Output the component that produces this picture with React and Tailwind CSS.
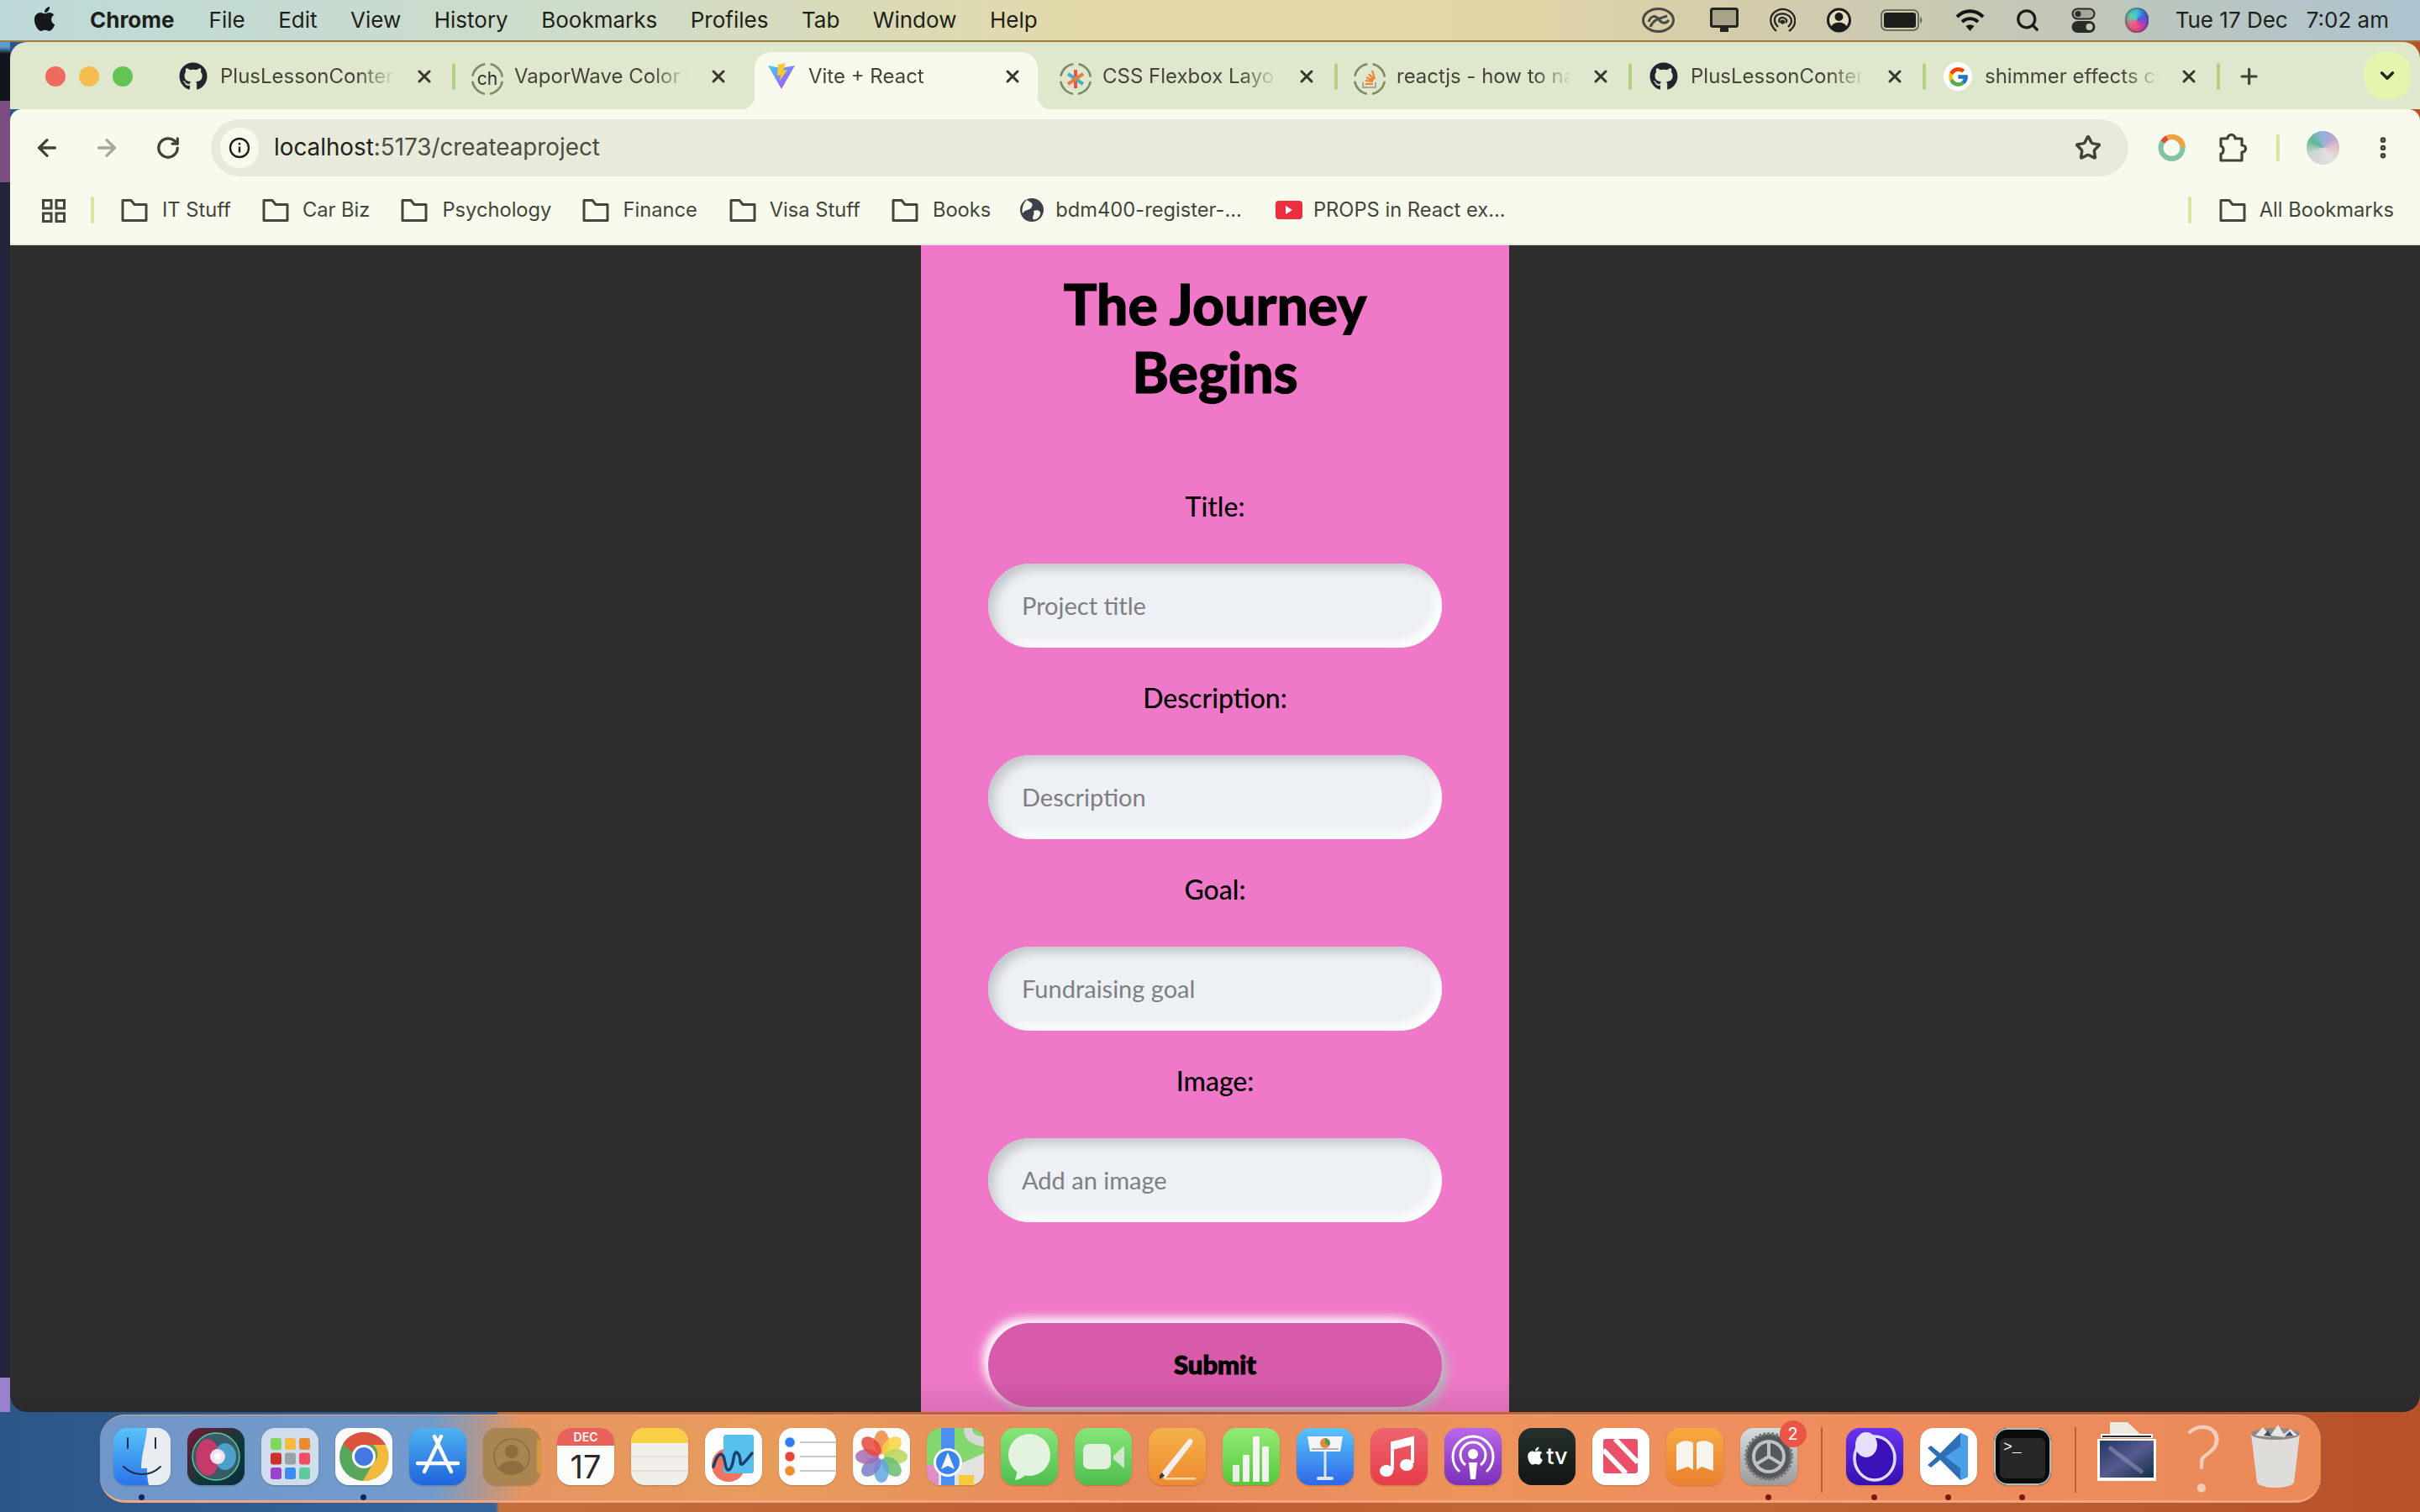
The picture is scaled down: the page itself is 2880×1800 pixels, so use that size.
import { ArrowLeft, ArrowRight, RotateCw, Star, Plus, ChevronDown, X, EllipsisVertical, Search } from 'lucide-react'
import { FaApple, FaGithub } from 'react-icons/fa'
import { FcGoogle } from 'react-icons/fc'

const SF = { fontFamily: 'Inter, "Liberation Sans", sans-serif' }

function Folder() {
  return (
    <svg width="32" height="30" viewBox="0 0 32 30" fill="none" stroke="#43463a" strokeWidth="3" strokeLinejoin="round" className="shrink-0">
      <path d="M2 3.5h10l4 5h14v19H2z" />
    </svg>
  )
}

function RingIcon({ children }) {
  return (
    <svg width="40" height="40" viewBox="0 0 40 40" fill="none">
      <circle cx="20" cy="20" r="18" stroke="#7d8a68" strokeWidth="2.5" strokeDasharray="22 6.3" strokeDashoffset="-3" />
      {children}
    </svg>
  )
}

function ViteIcon() {
  return (
    <svg width="34" height="32" viewBox="0 0 34 32">
      <defs>
        <linearGradient id="vite-a" x1="0" y1="0" x2="1" y2="1">
          <stop offset="0" stopColor="#41d1ff" />
          <stop offset="1" stopColor="#bd34fe" />
        </linearGradient>
      </defs>
      <path d="M1 4l15 3 17-3-16 28z" fill="url(#vite-a)" />
      <path d="M22 1l-9 2-1 13 4-1-1 7 9-13-5 1z" fill="#ffc928" />
    </svg>
  )
}

const TABS = [
  { title: 'PlusLessonContent', icon: <FaGithub size={34} color="#20262e" /> },
  { title: 'VaporWave Color Palette', icon: <RingIcon><text x="20" y="27" textAnchor="middle" fontSize="21" fill="#30342a" fontFamily="Inter, sans-serif">ch</text></RingIcon> },
  { title: 'Vite + React', icon: <ViteIcon />, active: true },
  {
    title: 'CSS Flexbox Layout Guide',
    icon: (
      <RingIcon>
        <path d="M20 9v22" stroke="#e8584a" strokeWidth="4" />
        <path d="M11 14l18 12" stroke="#46b0c4" strokeWidth="4" />
        <path d="M29 14L11 26" stroke="#ef7b3c" strokeWidth="4" />
      </RingIcon>
    ),
  },
  {
    title: 'reactjs - how to name a component',
    icon: (
      <RingIcon>
        <path d="M12 24v6h15v-6" stroke="#a9a8a0" strokeWidth="2" />
        <path d="M15 26h9M15 22l9 1M16 18l8 4M19 14l6 7M23 10l3 10" stroke="#ef8236" strokeWidth="2.2" />
      </RingIcon>
    ),
  },
  { title: 'PlusLessonContent', icon: <FaGithub size={34} color="#20262e" /> },
  {
    title: 'shimmer effects css',
    icon: (
      <span className="flex h-[34px] w-[34px] items-center justify-center rounded-full bg-white">
        <FcGoogle size={27} />
      </span>
    ),
  },
]

const BOOKMARKS = [
  { label: 'IT Stuff', gap: 17, after: 37 },
  { label: 'Car Biz', gap: 16, after: 37 },
  { label: 'Psychology', gap: 17, after: 37 },
  { label: 'Finance', gap: 16, after: 38 },
  { label: 'Visa Stuff', gap: 16, after: 37 },
  { label: 'Books', gap: 17, after: 35 },
]

function MenuBar() {
  const items = ['File', 'Edit', 'View', 'History', 'Bookmarks', 'Profiles', 'Tab', 'Window', 'Help']
  return (
    <header
      className="flex h-[50px] shrink-0 items-center border-b-2 border-b-[#9d7d3f] bg-[linear-gradient(90deg,#bcdad9_0%,#cfdcc9_25%,#e3d9a8_45%,#e2d6a6_62%,#d6cdaa_70%,#c6c8b4_82%,#adc3cf_100%)] pl-[40px] pr-[37px] text-[26px] leading-none text-[#1e1f19]"
      style={SF}
    >
      <FaApple size={33} color="#15171a" className="mb-[4px] w-[26px]" />
      <span className="ml-[41px] font-bold">Chrome</span>
      <div className="ml-[41px] flex gap-[39.5px]">
        {items.map((item) => (
          <span key={item}>{item}</span>
        ))}
      </div>
      <div className="ml-auto flex items-center">
        <svg width="39" height="30" viewBox="0 0 39 30" fill="none" stroke="#4a4a44" strokeWidth="3">
          <ellipse cx="19.5" cy="15" rx="18" ry="13.5" />
          <path d="M8 17c3-8 8-8 12-3s8 6 12 1M10 23c4-10 12-10 20-13" />
        </svg>
        <svg width="34" height="30" viewBox="0 0 34 30" className="ml-[42px]">
          <rect x="1.5" y="1.5" width="31" height="21" rx="2" fill="#aaa38a" stroke="#232320" strokeWidth="3" />
          <rect x="12" y="23" width="10" height="6" fill="#232320" />
        </svg>
        <svg width="31" height="30" viewBox="0 0 31 30" fill="none" stroke="#22221e" strokeWidth="2.2" className="ml-[37px]">
          <path d="M8 28C-1 20-1 9 8 4s20 0 22 9c1 6-1 11-7 15" />
          <path d="M10 23C4 17 5 10 11 8s15 1 15 8c0 3-2 5-4 7" />
          <path d="M12 18c-2-4 1-7 4-6s6 3 3 6" />
          <circle cx="15.5" cy="17" r="1.5" fill="#22221e" />
        </svg>
        <svg width="29" height="30" viewBox="0 0 29 30" className="ml-[37px]">
          <circle cx="14.5" cy="15" r="13" fill="#e6dcc0" stroke="#1c1c1a" strokeWidth="3" />
          <circle cx="14.5" cy="11" r="5" fill="#1c1c1a" />
          <path d="M5 23c3-7 16-7 19 0-5 6-14 6-19 0z" fill="#1c1c1a" />
        </svg>
        <svg width="51" height="26" viewBox="0 0 51 26" className="ml-[35px]">
          <rect x="1" y="1" width="44" height="24" rx="6" fill="none" stroke="#6d6b5e" strokeWidth="2" />
          <rect x="4" y="4" width="38" height="18" rx="3" fill="#1d1d1a" />
          <path d="M47 9c3 1 3 7 0 8z" fill="#6d6b5e" />
        </svg>
        <svg width="35" height="28" viewBox="0 0 35 28" fill="none" stroke="#141412" strokeWidth="4" className="ml-[38px]">
          <path d="M2 10c9-9 22-9 31 0" />
          <path d="M8 16c6-5 13-5 19 0" />
          <path d="M17.5 27l-5-6c3-2 7-2 10 0z" fill="#141412" strokeWidth="0" />
        </svg>
        <Search size={30} color="#1c1c1a" strokeWidth={2.6} className="ml-[36px]" />
        <svg width="29" height="30" viewBox="0 0 29 30" className="ml-[37px]">
          <rect x="1.5" y="1.5" width="26" height="12" rx="6" fill="#a9a79b" stroke="#2a2a26" strokeWidth="2" />
          <circle cx="8" cy="7.5" r="3.5" fill="#2a2a26" />
          <rect x="0.5" y="16" width="28" height="14" rx="7" fill="#2a2a26" />
          <circle cx="21.5" cy="23" r="4" fill="#c8c6b4" />
        </svg>
        <span className="ml-[35px] h-[30px] w-[28px] rounded-full bg-[conic-gradient(#46c3d8,#3f5fe0,#b03fb8,#ef4f78,#e06a90,#60d0a0,#46c3d8)] shadow-[inset_0_0_5px_#234]" />
        <span className="ml-[32px] flex gap-[22px]">
          <span>Tue 17 Dec</span>
          <span>7:02 am</span>
        </span>
      </div>
    </header>
  )
}

function Tab({ title, icon, active, showSep }) {
  return (
    <div className="flex h-[68px] w-[350px] shrink-0 items-start">
      <div className="relative flex h-[68px] w-[346px] items-start pt-[12px]">
        {active && (
          <>
            <span className="absolute inset-y-0 left-[6px] right-[3px] rounded-t-[20px] bg-[#f9faee]" />
            <span className="absolute bottom-0 left-[-10px] h-[16px] w-[16px] bg-[radial-gradient(circle_at_0_0,#dfe8cc_16px,#f9faee_16.5px)]" />
            <span className="absolute bottom-0 right-[-13px] h-[16px] w-[16px] bg-[radial-gradient(circle_at_100%_0,#dfe8cc_16px,#f9faee_16.5px)]" />
          </>
        )}
        <span className="relative ml-[18px] flex w-[40px] justify-center">{icon}</span>
        <span
          className="relative ml-[12px] mt-[-1px] w-[210px] overflow-hidden whitespace-nowrap text-[24px] leading-[36px] text-[#42463a] [mask-image:linear-gradient(90deg,black_78%,transparent_99%)]"
          style={SF}
        >
          {title}
        </span>
        <X size={24} strokeWidth={3} color="#33372c" className="relative ml-[21px] mt-[5px]" />
      </div>
      <span className={`mt-[13px] h-[32px] w-[4px] rounded-sm ${showSep ? 'bg-[#b5cf87]' : ''}`} />
    </div>
  )
}

function TabStrip() {
  return (
    <div className="flex h-[80px] items-end bg-[#dfe8cc] pr-[12px]">
      <div className="flex h-[68px] w-[180px] shrink-0 gap-[16px] pl-[42px] pt-[17px]">
        <span className="h-[24px] w-[24px] rounded-full bg-[#ee6a5f]" />
        <span className="h-[24px] w-[24px] rounded-full bg-[#f5bd4f]" />
        <span className="h-[24px] w-[24px] rounded-full bg-[#61c554]" />
      </div>
      {TABS.map((tab, i) => (
        <Tab key={i} {...tab} showSep={i !== 1 && i !== 2} />
      ))}
      <Plus size={30} strokeWidth={2.6} color="#3f4435" className="mb-[24px] ml-[20px]" />
      <div className="mb-[12px] ml-[123px] flex h-[56px] w-[55px] items-center justify-center rounded-[22px] bg-[#e4f5ae]">
        <ChevronDown size={26} strokeWidth={3.2} color="#25281e" />
      </div>
    </div>
  )
}

function Toolbar() {
  return (
    <div className="flex h-[80px] items-start rounded-t-[14px] bg-[#f9faee] pt-[12px] text-[#42463a]">
      <ArrowLeft size={32} strokeWidth={2.5} color="#3f4435" className="ml-[28px] mt-[18px]" />
      <ArrowRight size={32} strokeWidth={2.5} color="#a5a99a" className="ml-[39px] mt-[18px]" />
      <RotateCw size={30} strokeWidth={2.6} color="#3f4435" className="ml-[42px] mt-[19px]" />
      <div className="ml-[36px] flex h-[68px] w-[2282px] items-center rounded-full bg-[#e8ebdc] pl-[11px] pr-[32px]">
        <span className="flex h-[48px] w-[46px] items-center justify-center rounded-full bg-[#f9faee]">
          <svg width="26" height="26" viewBox="0 0 26 26" fill="none" stroke="#1f2119" strokeWidth="2.4">
            <circle cx="13" cy="13" r="11" />
            <path d="M13 11.5v7M13 7v2.6" />
          </svg>
        </span>
        <span className="ml-[18px] text-[27.8px] text-[#4a4e40]" style={SF}>
          <span className="text-[#1f2119]">localhost</span>:5173/createaproject
        </span>
        <Star size={32} strokeWidth={2.6} color="#3f4435" className="ml-auto" />
      </div>
      <svg width="33" height="34" viewBox="0 0 33 34" fill="none" strokeWidth="6" className="ml-[35px] mt-[17px]">
        <circle cx="16.5" cy="17" r="13" stroke="#82c2a6" />
        <path d="M10 6a13 13 0 0 1 20 10" stroke="#f3a33c" />
        <path d="M6 10a13 13 0 0 1 5-5" stroke="#e0483a" />
      </svg>
      <svg width="33" height="34" viewBox="0 0 33 34" fill="none" stroke="#3f4435" strokeWidth="3.2" strokeLinejoin="round" className="ml-[40px] mt-[17px]">
        <path d="M2 6h8c0-6 9-6 9 0h8v8c6 0 6 8 0 8v10H2v-8c4 0 4-9 0-9z" />
      </svg>
      <span className="ml-[35px] mt-[18px] h-[32px] w-[4px] rounded-sm bg-[#d6e8a0]" />
      <span className="ml-[32px] mt-[14px] h-[40px] w-[39px] rounded-full bg-[conic-gradient(from_300deg,#5fb98e,#8ab5d8,#b9a5d4,#e0c8c8,#e2e2e2,#d8d8d8,#cfd4d0,#5fb98e)]" />
      <EllipsisVertical size={32} strokeWidth={3} color="#3f4435" className="ml-[36px] mt-[18px]" />
    </div>
  )
}

function BookmarksBar() {
  return (
    <div className="flex h-[82px] items-start border-b-2 border-b-[#e8e9dc] bg-[#f9faee] pt-[24px] text-[23.7px] leading-[32px] text-[#42463a]" style={SF}>
      <svg width="28" height="28" viewBox="0 0 28 28" fill="none" stroke="#43463a" strokeWidth="3" className="ml-[38px] mt-[3px]">
        <rect x="1.5" y="1.5" width="9.5" height="9.5" />
        <rect x="17" y="1.5" width="9.5" height="9.5" />
        <rect x="1.5" y="17" width="9.5" height="9.5" />
        <rect x="17" y="17" width="9.5" height="9.5" />
      </svg>
      <span className="ml-[30px] h-[32px] w-[4px] rounded-sm bg-[#d6e8a0]" />
      <div className="ml-[32px] flex items-center">
        {BOOKMARKS.map((b) => (
          <div key={b.label} className="flex items-center">
            <Folder />
            <span style={{ marginLeft: b.gap, marginRight: b.after }}>{b.label}</span>
          </div>
        ))}
        <svg width="28" height="30" viewBox="0 0 28 30" className="shrink-0">
          <circle cx="14" cy="15" r="14" fill="#3c4149" />
          <path d="M8 3c4 3 8 3 6 8s-8 3-10 7S1 9 8 3zM16 16c5-2 9 0 8 4s-5 7-8 6 2-6 0-10z" fill="#f9faee" />
        </svg>
        <span className="ml-[14px] mr-[40px]">bdm400-register-...</span>
        <span className="flex h-[22px] w-[32px] items-center justify-center rounded-[4px] bg-[#ec2f3f]">
          <span className="h-0 w-0 border-y-[5px] border-l-[8px] border-y-transparent border-l-white" />
        </span>
        <span className="ml-[13px]">PROPS in React ex...</span>
      </div>
      <span className="ml-auto h-[32px] w-[4px] rounded-sm bg-[#d6e8a0]" />
      <div className="ml-[33px] mr-[31px] flex items-center gap-[16px]">
        <Folder />
        <span>All Bookmarks</span>
      </div>
    </div>
  )
}

function Field({ label, placeholder }) {
  return (
    <div className="flex flex-col items-center">
      <label className="h-[40px] text-[32px] font-medium leading-[40px] text-black">{label}</label>
      <input
        type="text"
        placeholder={placeholder}
        className="mt-[48px] h-[100px] w-[540px] rounded-[50px] bg-[#edf0f4] pb-[2px] pl-[40px] text-[29px] shadow-[inset_7px_7px_12px_#c4c7cc,inset_-7px_-7px_12px_#ffffff] outline-none placeholder:text-[#7e7f83]"
      />
    </div>
  )
}

function CreateProject() {
  return (
    <main className="relative flex-1 overflow-hidden rounded-b-[20px] bg-[#2e2e2e]">
      <div className="mx-auto flex h-full w-[700px] flex-col items-center bg-[#ef79c8] pt-[29px]" style={{ fontFamily: 'Lato, sans-serif' }}>
        <h1 className="w-[460px] text-center text-[66px] font-black leading-[81px] text-black [-webkit-text-stroke:1px_black]">The Journey Begins</h1>
        <form className="mt-[100px] flex flex-col items-center gap-[40px]">
          <Field label="Title:" placeholder="Project title" />
          <Field label="Description:" placeholder="Description" />
          <Field label="Goal:" placeholder="Fundraising goal" />
          <Field label="Image:" placeholder="Add an image" />
          <button
            type="button"
            className="mt-[80px] h-[100px] w-[540px] shrink-0 rounded-[50px] bg-[#d75aab] pb-[2px] text-[31px] font-black text-black shadow-[-6px_-6px_12px_#ffffff,6px_6px_12px_#b5b8bc] [-webkit-text-stroke:1px_black]"
          >
            Submit
          </button>
        </form>
      </div>
      {/* dock's shadow falls on the bottom of the window */}
      <div className="pointer-events-none absolute inset-x-0 bottom-0 h-[42px] bg-[linear-gradient(180deg,transparent,rgba(0,0,0,0.09))]" />
    </main>
  )
}

function Tile({ className = '', children }) {
  return (
    <div className={`relative h-[68px] w-[68px] overflow-hidden rounded-[16px] shadow-[0_1px_2px_rgba(0,0,0,0.2)] ${className}`}>
      <svg viewBox="0 0 68 68" width="68" height="68" className="absolute inset-0">
        {children}
      </svg>
    </div>
  )
}

const PETALS = ['#f0883e', '#f7d23e', '#b6d65a', '#6bbd6e', '#5fa8dd', '#7c7cc9', '#a56cb0', '#e6483d']

const APPS = [
  {
    dot: '#0a2463',
    tile: (
      <Tile className="bg-[linear-gradient(180deg,#58c3f8,#2b74ea)]">
        <path d="M40 0h28v68H42c-2-8-2-14-2-20h-7c0-16 6-32 7-48z" fill="#e9edf2" />
        <path d="M17 12v12M50 12v12" stroke="#1e2d48" strokeWidth="2" strokeLinecap="round" />
        <path d="M12 46c12 12 32 12 44 0" stroke="#1e2d48" strokeWidth="2" fill="none" strokeLinecap="round" />
      </Tile>
    ),
  },
  {
    tile: (
      <Tile className="bg-[linear-gradient(135deg,#7a1634,#0d3a3a_60%,#0f2a3c)]">
        <circle cx="34" cy="34" r="28" fill="#3a5a68" stroke="#58c8a0" strokeWidth="1.5" />
        <ellipse cx="24" cy="35" rx="14" ry="22" fill="#c43a68" />
        <ellipse cx="45" cy="34" rx="13" ry="16" fill="#4aa0c8" />
        <circle cx="36" cy="34" r="9" fill="#f4e0f0" />
        <circle cx="36" cy="34" r="4" fill="#ffffff" />
      </Tile>
    ),
  },
  {
    tile: (
      <Tile className="bg-[#d0ddec]">
        {[
          ['#7fd857', '#f5b93c', '#ea8a33'],
          ['#c9332a', '#9aa2a6', '#ef4e62'],
          ['#9a41d0', '#3a8cf0', '#5dcaa0'],
        ].map((row, r) =>
          row.map((c, i) => <rect key={c} x={11 + i * 17} y={12 + r * 17.5} width="13" height="14" rx="3" fill={c} />),
        )}
      </Tile>
    ),
  },
  {
    dot: '#0a2463',
    tile: (
      <Tile className="bg-[#fbfbfb]">
        <circle cx="34" cy="34" r="29" fill="#57a65c" />
        <path d="M34 5a29 29 0 0 1 26 15H34a14 14 0 0 0-13 9L9 19A29 29 0 0 1 34 5z" fill="#dc5440" />
        <path d="M60 20a29 29 0 0 1-27 43l12-21a14 14 0 0 0 0-22z" fill="#f3b93e" />
        <circle cx="34" cy="34" r="14" fill="#fff" />
        <circle cx="34" cy="34" r="11" fill="#4479e4" />
      </Tile>
    ),
  },
  {
    tile: (
      <Tile className="bg-[linear-gradient(180deg,#4eb2f0,#1f64dc)]">
        <path d="M38 10L18 52M30 10l20 42M10 42h48" stroke="#fff" strokeWidth="4.5" strokeLinecap="round" fill="none" />
      </Tile>
    ),
  },
  {
    tile: (
      <Tile className="bg-[#a98552]">
        <rect x="64" y="14" width="4" height="40" fill="#d49a3a" />
        <circle cx="34" cy="34" r="21" fill="none" stroke="#8e6d3f" strokeWidth="1.5" />
        <circle cx="34" cy="28" r="8" fill="#8e6d3f" />
        <path d="M19 48c4-12 26-12 30 0-8 8-22 8-30 0z" fill="#8e6d3f" />
      </Tile>
    ),
  },
  {
    tile: (
      <Tile className="bg-[#fbfbfa]">
        <rect width="68" height="21" fill="#e8615a" />
        <text x="34" y="16" textAnchor="middle" fontSize="14" fontWeight="600" fill="#fff" fontFamily="Inter, sans-serif">DEC</text>
        <text x="34" y="60" textAnchor="middle" fontSize="38" fill="#2a2a2a" fontFamily="Inter, sans-serif">17</text>
      </Tile>
    ),
  },
  {
    tile: (
      <Tile className="bg-[#f1efe9]">
        <rect width="68" height="18" fill="#f9cf45" />
        <path d="M0 34h68M0 51h68" stroke="#dcdad2" strokeWidth="1.5" />
      </Tile>
    ),
  },
  {
    tile: (
      <Tile className="bg-white">
        <circle cx="28" cy="44" r="20" fill="#ee7460" />
        <rect x="22" y="8" width="36" height="46" rx="3" fill="#58c0ec" />
        <path d="M10 46c6-20 12-18 14-4s8 8 10-6 8-4 8 4 6 0 14-10" stroke="#1c3f6e" strokeWidth="3.5" fill="none" strokeLinecap="round" />
      </Tile>
    ),
  },
  {
    tile: (
      <Tile className="bg-white">
        <circle cx="13" cy="17" r="6" fill="#2f7bf0" stroke="#bcd2f5" strokeWidth="1" />
        <circle cx="13" cy="34" r="6" fill="#e8453a" stroke="#f5c8c4" strokeWidth="1" />
        <circle cx="13" cy="51" r="6" fill="#ee8c2a" stroke="#f6d6b0" strokeWidth="1" />
        <path d="M25 17h43M25 34h43M25 51h43" stroke="#b8b8b8" strokeWidth="1.5" />
      </Tile>
    ),
  },
  {
    tile: (
      <Tile className="bg-[#fbfbfb]">
        {PETALS.map((c, i) => (
          <ellipse key={c} cx="34" cy="17" rx="9" ry="14" fill={c} opacity="0.85" transform={`rotate(${i * 45} 34 34)`} />
        ))}
      </Tile>
    ),
  },
  {
    tile: (
      <Tile className="bg-[#84d66e]">
        <path d="M0 60L68 30v38H0z" fill="#e2e2e0" />
        <path d="M44 0c0 14 8 20 24 22V10C58 10 54 6 54 0z" fill="#d8d8d8" />
        <rect x="17" y="0" width="16" height="68" fill="#4c8ff0" />
        <rect x="0" y="44" width="14" height="24" fill="#e18dc8" />
        <rect x="38" y="56" width="18" height="12" fill="#f5cb3c" />
        <circle cx="25" cy="41" r="17" fill="#fff" />
        <circle cx="25" cy="41" r="14" fill="#3b84ee" />
        <path d="M25 29l8 20-8-4-8 4z" fill="#fff" />
      </Tile>
    ),
  },
  {
    tile: (
      <Tile className="bg-[linear-gradient(180deg,#85e67a,#4fbe4e)]">
        <ellipse cx="34" cy="32" rx="25" ry="25" fill="#e4f3e0" />
        <path d="M20 50l-3 12c6-1 11-4 14-8z" fill="#e4f3e0" />
      </Tile>
    ),
  },
  {
    tile: (
      <Tile className="bg-[linear-gradient(180deg,#85e67a,#4fbe4e)]">
        <rect x="10" y="19" width="33" height="30" rx="7" fill="#e2f0de" />
        <path d="M46 33l13-12v27L46 37z" fill="#cfe6c8" />
      </Tile>
    ),
  },
  {
    tile: (
      <Tile className="bg-[linear-gradient(180deg,#f6b04a,#ee8b30)]">
        <path d="M13 56L47 14c2-3 7 0 5 4L20 60z" fill="#f4efe8" />
        <path d="M13 56l3-3 3 4-6 4z" fill="#3a3a3a" />
        <rect x="18" y="59" width="38" height="2.5" rx="1" fill="#f8d9a8" />
      </Tile>
    ),
  },
  {
    tile: (
      <Tile className="bg-[linear-gradient(180deg,#93ea76,#56c93c)]">
        <rect x="12" y="44" width="8" height="20" rx="1" fill="#e8efe4" />
        <rect x="24" y="32" width="8" height="32" rx="1" fill="#f0f4ec" />
        <rect x="36" y="10" width="8" height="54" rx="1" fill="#f4f6f2" />
        <rect x="47" y="22" width="8" height="42" rx="1" fill="#f0f4ec" />
      </Tile>
    ),
  },
  {
    tile: (
      <Tile className="bg-[linear-gradient(180deg,#5ac4fb,#2d68e8)]">
        <path d="M13 10h42l-3 18H16z" fill="#f4f5f6" />
        <circle cx="34" cy="18" r="6" fill="#e28a3a" />
        <path d="M34 18V12a6 6 0 0 1 5 9z" fill="#4a9a6c" />
        <rect x="18" y="24" width="32" height="2" fill="#a8b2c0" />
        <rect x="32.5" y="28" width="3" height="30" fill="#dfe5ec" />
        <rect x="24" y="58" width="20" height="4" rx="2" fill="#dfe5ec" />
      </Tile>
    ),
  },
  {
    tile: (
      <Tile className="bg-[linear-gradient(180deg,#ee6470,#e63c48)]">
        <path d="M26 50V18l24-6v30" fill="none" stroke="#fff" strokeWidth="4" />
        <path d="M26 18l24-6v8l-24 6z" fill="#fff" />
        <ellipse cx="19" cy="51" rx="8" ry="7" fill="#fff" />
        <ellipse cx="43" cy="44" rx="8" ry="7" fill="#fff" />
      </Tile>
    ),
  },
  {
    tile: (
      <Tile className="bg-[linear-gradient(180deg,#b967e8,#7a30b8)]">
        <path d="M18 52a24 24 0 1 1 32 0" fill="none" stroke="#fff" strokeWidth="3" />
        <path d="M25 44a15 15 0 1 1 18 0" fill="none" stroke="#fff" strokeWidth="3" />
        <circle cx="34" cy="31" r="6" fill="#fff" />
        <path d="M29 41h10l-2 20h-6z" fill="#fff" />
      </Tile>
    ),
  },
  {
    tile: (
      <div className="relative flex h-[68px] w-[68px] items-center justify-center gap-[1px] rounded-[16px] bg-[linear-gradient(180deg,#26302c,#121615)] text-[27px] font-medium text-white" style={SF}>
        <FaApple size={24} className="mb-[2px]" />
        <span>tv</span>
      </div>
    ),
  },
  {
    tile: (
      <Tile className="bg-white">
        <rect x="13" y="13" width="41" height="41" rx="3" fill="#ea5068" />
        <path d="M13 26l27 28M27 13l27 28" stroke="#fff" strokeWidth="6" fill="none" />
      </Tile>
    ),
  },
  {
    tile: (
      <Tile className="bg-[linear-gradient(180deg,#f6aa40,#ec8030)]">
        <path d="M12 20c6-6 15-6 20-2v32l-6-4-14 5zM36 18c5-4 14-4 20 2v31l-14-5-6 4z" fill="#f7f3ee" />
      </Tile>
    ),
  },
  {
    dot: '#7a1a00',
    badge: '2',
    tile: (
      <Tile className="bg-[linear-gradient(180deg,#d4dde0,#9a9c9c)]">
        <circle cx="34" cy="34" r="27" fill="#55585a" stroke="#77797b" strokeWidth="4" strokeDasharray="3 2" />
        <circle cx="34" cy="34" r="20" fill="#bfc2c4" />
        <circle cx="34" cy="34" r="16" fill="#55585a" />
        <path d="M34 34V17M34 34L19 43M34 34l15 9" stroke="#bfc2c4" strokeWidth="4" />
      </Tile>
    ),
  },
  { sep: true },
  {
    dot: '#7a1a00',
    tile: (
      <Tile className="bg-[linear-gradient(180deg,#6a33f0,#3410b0)]">
        <ellipse cx="34" cy="36" rx="24" ry="26" fill="#3a12b8" stroke="#e0dcf8" strokeWidth="3.5" />
        <ellipse cx="24" cy="20" rx="13" ry="15" fill="#e6e0fa" />
      </Tile>
    ),
  },
  {
    dot: '#7a1a00',
    tile: (
      <Tile className="bg-white">
        <path d="M48 6L24 30 13 21l-4 3 11 10-11 10 4 3 11-9 24 24 9-4V10z" fill="#2f6fb8" />
        <path d="M48 6l9 4v48l-9 4V22L30 34l18 14z" fill="#4a9fe8" />
      </Tile>
    ),
  },
  {
    dot: '#7a1a00',
    tile: (
      <Tile className="bg-[#0b0b0b]">
        <rect x="1" y="1" width="66" height="66" rx="15" fill="none" stroke="#a8c0c8" strokeWidth="2" />
        <rect x="7" y="12" width="54" height="48" rx="6" fill="#272727" />
        <text x="11" y="28" fontSize="18" fill="#fff" fontFamily="'Liberation Mono', monospace">&gt;_</text>
      </Tile>
    ),
  },
  { sep: true },
]

function PreviewIcon() {
  return (
    <svg width="70" height="70" viewBox="0 0 70 70" className="ml-[17px] mt-[-7px]">
      <defs>
        <linearGradient id="sky" x1="0" y1="0" x2="1" y2="1">
          <stop offset="0" stopColor="#22375f" />
          <stop offset="0.5" stopColor="#565a92" />
          <stop offset="1" stopColor="#142f44" />
        </linearGradient>
      </defs>
      <path d="M15 0h21l16 15H15z" fill="#eee9e0" />
      <rect x="4" y="14" width="62" height="5" fill="#fff" />
      <rect x="6" y="16" width="58" height="2" fill="#2a2a2a" />
      <rect x="0" y="20" width="70" height="50" fill="#fff" />
      <rect x="3" y="22" width="64" height="44" fill="url(#sky)" />
      <path d="M14 30l40 30" stroke="#a8a2c8" strokeWidth="5" opacity="0.45" />
    </svg>
  )
}

function TrashIcon() {
  return (
    <svg width="60" height="78" viewBox="0 0 60 78" className="mt-[-5px]">
      <path d="M1 12c15-6 43-6 58 0l-7 58c-6 8-38 8-44 0z" fill="#dfddda" />
      <ellipse cx="30" cy="12" rx="29" ry="7" fill="#8d8a88" />
      <path d="M6 14l9-10 10 12zM24 14l9-13 9 15zM38 14l10-8 8 8z" fill="#e6e6e6" />
      <path d="M16 14l5-6 4 7zM42 14l5-5 4 5z" fill="#3c4a68" />
    </svg>
  )
}

function Dock() {
  return (
    <footer className="mx-auto mt-[3px] flex h-[105px] w-[2643px] items-start rounded-[30px] border-b-[3px] border-b-[#f4a583] border-t border-t-[#eaa584] bg-[linear-gradient(90deg,#7097c8_0%,#729bcb_15%,#e5955f_19%,#e89c5c_30%,#e88a5c_45%,#ed935c_62%,#ef8c5e_80%,#e98a58_100%)] pl-[16px] pt-[15px]">
      <div className="flex items-start gap-[20px]">
        {APPS.map((app, i) =>
          app.sep ? (
            <span key={i} className="mx-[8px] mt-[-1px] h-[78px] w-[2px] bg-[#b9622f]" />
          ) : (
            <div key={i} className="relative flex flex-col items-center">
              {app.tile}
              {app.dot && <span className="mt-[11px] h-[7px] w-[7px] rounded-full" style={{ background: app.dot }} />}
              {app.badge && (
                <span className="absolute right-[-11px] top-[-9px] flex h-[32px] w-[32px] items-center justify-center rounded-full bg-[#ea5548] text-[20px] text-white" style={SF}>
                  {app.badge}
                </span>
              )}
            </div>
          ),
        )}
      </div>
      <PreviewIcon />
      <span className="ml-[33px] mt-[-22px] w-[43px] text-center text-[110px] font-light leading-[110px] text-[#f3cdb9]" style={{ fontFamily: 'Lato, sans-serif' }}>
        ?
      </span>
      <span className="ml-[36px]">
        <TrashIcon />
      </span>
    </footer>
  )
}

export default function App() {
  return (
    <div className="flex h-[1800px] w-full flex-col overflow-hidden bg-[linear-gradient(90deg,#2b5688_0,#33659c_590px,#c4703a_594px,#bd5a2f_1400px,#c26a35_1900px,#b8502a_2880px)]">
      <MenuBar />
      <div className="flex h-[1631px] shrink-0">
        <div className="w-[12px] shrink-0 bg-[linear-gradient(180deg,#5b9bd0_0,#5b9bd0_6px,#10141c_14px,#10141c_70px,#7c4d80_70px,#7c4d80_167px,#23253a_167px,#23253a_1590px,#9b80cf_1590px,#9b80cf_100%)]" />
        <section className="flex flex-1 flex-col overflow-hidden rounded-[20px]">
          <TabStrip />
          <Toolbar />
          <BookmarksBar />
          <CreateProject />
        </section>
      </div>
      <Dock />
    </div>
  )
}
